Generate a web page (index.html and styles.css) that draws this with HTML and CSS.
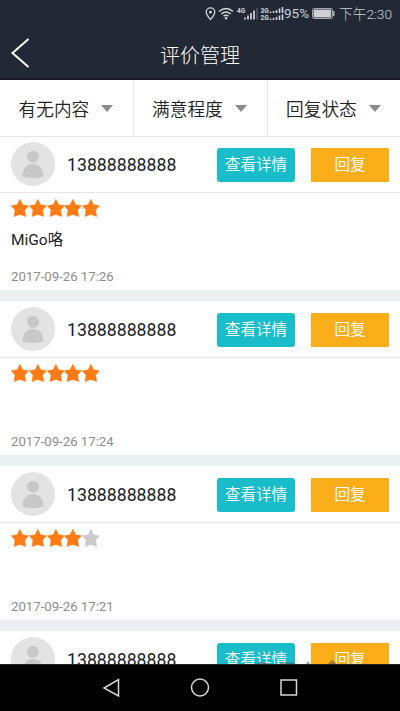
FILE: index.html
```html
<!DOCTYPE html>
<html lang="zh-CN">
<head>
<meta charset="utf-8">
<title>评价管理</title>
<link rel="stylesheet" href="styles.css">
</head>
<body>
<svg width="0" height="0" class="defs">
  <symbol id="star" viewBox="0 0 18 18"><path d="M9 .2 11.800 5.800 17.800 6.600 13.900 11.100 14.900 17.700 9 15.500 3.100 17.700 4.100 11.100 .2 6.600 6.200 5.800Z" fill="currentColor" stroke="currentColor" stroke-width=".5" stroke-linejoin="round"/></symbol>
  <symbol id="avatar" viewBox="0 0 44 44"><circle cx="22" cy="22" r="22" fill="#e3e3e3"/><circle cx="22" cy="14.700" r="6" fill="#c8c8c8"/><path d="M11.500 34.500C11.500 27 15.500 22 22 22S32.500 27 32.500 34.500Q28 36 22 36T11.500 34.500Z" fill="#c8c8c8"/></symbol>
</svg>
<div class="screen">
  <header class="top">
    <div class="status">
      <svg class="signals" width="80" height="18" viewBox="0 0 80 18" fill="none" stroke="#d2d5da">
        <path d="M6.500 15.500C4 12.500 2.200 10.500 2.200 8.200A4.300 4.300 0 0 1 10.800 8.200C10.800 10.500 9 12.500 6.500 15.500Z" stroke-width="1.300"/><circle cx="6.500" cy="8.200" r="1.400" fill="#d2d5da" stroke="none"/>
        <path d="M15 7.500Q22 1.500 29 7.500M17.300 10Q22 6 26.700 10M19.500 12.300Q22 10.200 24.500 12.300" stroke-width="1.500"/><circle cx="22" cy="14.300" r="1.200" fill="#d2d5da" stroke="none"/>
        <path d="M41 15.500V13.500M44 15.500V11.500M47 15.500V9M50 15.500V6.500" stroke-width="1.700"/><path d="M53 15.500V4" stroke="#565c67" stroke-width="1.500"/>
        <path d="M66.500 9V7.500M69.500 9V7M72.500 9V6M75.500 9V4.500M78.500 9V3M66.500 16V14.500M69.500 16V14M72.500 16V13M75.500 16V11.500M78.500 16V10.500" stroke-width="1.600"/>
        <g class="net"><text x="33" y="8.500">4G</text><text x="56.500" y="9">3G</text><text x="56.500" y="16">2G</text></g>
      </svg>
      <span class="percent">95%</span>
      <svg class="battery" width="23" height="11" viewBox="0 0 23 11"><rect x=".6" y=".6" width="19.800" height="9.800" rx="1.500" fill="none" stroke="#b4b7bd"/><rect x="1.600" y="1.600" width="17.500" height="7.800" fill="#cfd0d3"/><path d="M21.800 3V8" stroke="#b4b7bd" stroke-width="1.400"/></svg>
      <span class="time">下午2:30</span>
    </div>
    <div class="titlebar">
      <svg class="back" width="20" height="32" viewBox="0 0 20 32"><path d="M18.500 2 2.500 16 18.500 30" fill="none" stroke="#fff" stroke-width="2"/></svg>
      <h1>评价管理</h1>
    </div>
  </header>
  <nav class="filters">
    <div class="filter"><span>有无内容</span><i></i></div>
    <div class="filter"><span>满意程度</span><i></i></div>
    <div class="filter"><span>回复状态</span><i></i></div>
  </nav>
  <main class="list">
    <article class="card">
      <div class="head"><svg class="avatar"><use href="#avatar"/></svg><span class="phone">13888888888</span><span class="btn detail">查看详情</span><span class="btn reply">回复</span></div>
      <div class="stars"><svg><use href="#star"/></svg><svg><use href="#star"/></svg><svg><use href="#star"/></svg><svg><use href="#star"/></svg><svg><use href="#star"/></svg></div>
      <p class="comment">MiGo咯</p>
      <time>2017-09-26 17:26</time>
    </article>
    <article class="card">
      <div class="head"><svg class="avatar"><use href="#avatar"/></svg><span class="phone">13888888888</span><span class="btn detail">查看详情</span><span class="btn reply">回复</span></div>
      <div class="stars"><svg><use href="#star"/></svg><svg><use href="#star"/></svg><svg><use href="#star"/></svg><svg><use href="#star"/></svg><svg><use href="#star"/></svg></div>
      <p class="comment"></p>
      <time>2017-09-26 17:24</time>
    </article>
    <article class="card">
      <div class="head"><svg class="avatar"><use href="#avatar"/></svg><span class="phone">13888888888</span><span class="btn detail">查看详情</span><span class="btn reply">回复</span></div>
      <div class="stars"><svg><use href="#star"/></svg><svg><use href="#star"/></svg><svg><use href="#star"/></svg><svg><use href="#star"/></svg><svg class="off"><use href="#star"/></svg></div>
      <p class="comment"></p>
      <time>2017-09-26 17:21</time>
    </article>
    <article class="card">
      <div class="head"><svg class="avatar"><use href="#avatar"/></svg><span class="phone">13888888888</span><span class="btn detail">查看详情</span><span class="btn reply">回复</span></div>
    </article>
    <svg class="marks" width="80" height="4" viewBox="0 0 80 4"><path d="M0 4 2 2H9L11 4ZM22 4 24 2.500H36L38 4ZM49 4 51 1 53 4ZM71 4 75 0 80 4Z"/></svg>
  </main>
  <footer class="navbar">
    <svg width="20" height="20" viewBox="0 0 20 20"><path d="M17.500 1.500V18L3 10Z"/></svg>
    <svg width="20" height="20" viewBox="0 0 20 20"><circle cx="10" cy="9.500" r="8.500"/></svg>
    <svg width="20" height="20" viewBox="0 0 20 20"><rect x="2" y="2" width="15.500" height="15"/></svg>
  </footer>
</div>
</body>
</html>
```
FILE: styles.css
```css
* { box-sizing: border-box; }
body { margin: 0; font-family: Roboto, "Noto Sans CJK SC", sans-serif; color: #222; }
.defs { position: absolute; }
svg { display: block; flex: none; }
.screen { width: 400px; height: 711px; display: flex; flex-direction: column; overflow: hidden; background: #fff; }
.top { height: 80px; flex: none; padding-bottom: 1px; background: #222834; border-bottom: 2px solid #151a24; color: #fff; }
.status { height: 28px; display: flex; align-items: center; padding-left: 204px; color: #cdd0d6; font-size: 14px; font-weight: 300; white-space: nowrap; }
.net { font: 700 6.500px Roboto, sans-serif; fill: #d2d5da; stroke: none; }
.signals { margin-top: -2px; }
.percent { width: 28px; margin-top: -2px; font-size: 13.500px; font-weight: 400; }
.battery { margin: -1px 4px 0 0; }
.time { margin-top: -2px; font-size: 13.700px; }
.titlebar { height: 51px; display: flex; align-items: center; padding-left: 10px; }
.back { margin-bottom: 1px; }
h1 { margin: 4px 0 0 130px; font-size: 20px; font-weight: 300; line-height: 28px; }
.filters { height: 57px; flex: none; display: grid; grid-template-columns: 133px 134px 133px; border-bottom: 1px solid #e6e6e6; }
.filter { display: flex; align-items: center; padding-left: 18.500px; font-size: 17.700px; font-weight: 350; white-space: nowrap; }
.filter span { margin-top: -1px; }
.filter + .filter { padding-left: 18px; border-left: 1px solid #e8e8e8; }
.filter i { margin-left: 12px; border: 6.500px solid transparent; border-top: 7px solid #8c8c8c; border-bottom: 0; }
.list { position: relative; height: 528px; flex: none; margin-top: -1px; display: flex; flex-direction: column; gap: 11px; overflow: hidden; background: #ebf0f3; }
.card { height: 154px; flex: none; background: #fff; }
.card:first-child { border-top: 1px solid #e6e6e6; }
.card:first-child .head { height: 56px; padding-bottom: 1px; }
.head { height: 57px; display: flex; align-items: center; padding: 0 11px; border-bottom: 1px solid #e6e6e6; }
.avatar { width: 44px; height: 44px; }
.phone { width: 150px; margin: 2px 0 0 12px; font-size: 17.700px; }
.btn { width: 78px; height: 34px; margin-top: 2px; line-height: 35px; text-align: center; color: #fff; font-size: 15.600px; font-weight: 350; }
.detail { background: #18bdc9; border-radius: 3px; }
.reply { margin-left: 16px; background: #f9ae1a; }
.stars { display: flex; padding: 6px 0 0 11px; color: #ff7b14; }
.stars svg { width: 17.750px; height: 18px; }
.stars .off { color: #cbcbcb; }
.comment { height: 24px; margin: 11px 11px 0; font-size: 15.500px; line-height: 24px; }
time { display: block; margin: 16px 11px 0; font-size: 13.200px; line-height: 18px; color: #8d8d8d; }
.marks { position: absolute; left: 257px; bottom: 0; fill: #4d4a45; opacity: .5; }
.navbar { height: 47px; flex: none; display: flex; align-items: center; justify-content: center; gap: 69px; background: #000; border-top: 1px solid #222; }
.navbar svg { fill: none; stroke: #d6d6d6; stroke-width: 1.500; }
```
